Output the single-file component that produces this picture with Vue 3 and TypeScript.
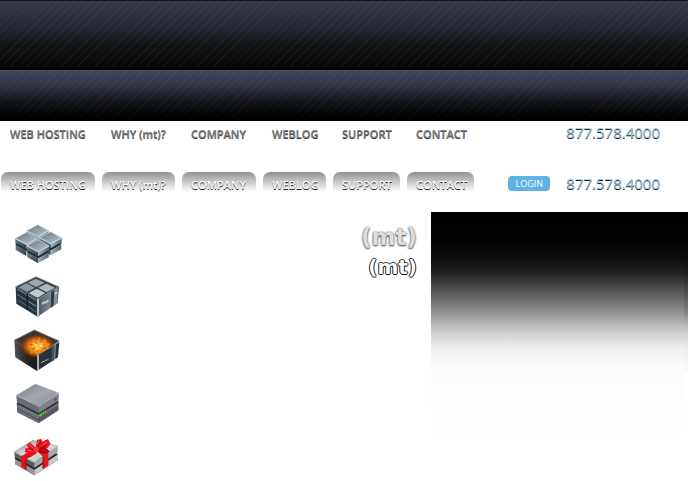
<script setup lang="ts">
interface Slab { x: number; y: number }

const links: string[] = ['WEB HOSTING', 'WHY (mt)?', 'COMPANY', 'WEBLOG', 'SUPPORT', 'CONTACT']
const phone = '877.578.4000'

// Back-to-front order so nearer cubes overlap the ones behind.
const cubes: Slab[] = [
  { x: 98, y: 47 },
  { x: 64, y: 70 },
  { x: 137, y: 68 },
  { x: 99, y: 92 },
]

const top = (x: number, y: number, w: number, h: number) =>
  `${x - w},${y} ${x},${y - h} ${x + w},${y} ${x},${y + h}`
const left = (x: number, y: number, w: number, h: number, t: number) =>
  `${x - w},${y} ${x},${y + h} ${x},${y + h + t} ${x - w},${y + t}`
const right = (x: number, y: number, w: number, h: number, t: number) =>
  `${x + w},${y} ${x},${y + h} ${x},${y + h + t} ${x + w},${y + t}`
</script>

<template>
  <div class="page">
    <header>
      <div class="band band-tall"></div>
      <div class="band band-short"></div>
    </header>

    <div class="row row-plain">
      <nav aria-label="Main">
        <ul class="tabs">
          <li v-for="l in links" :key="l"><a href="#">{{ l }}</a></li>
        </ul>
      </nav>
      <a class="phone" href="tel:8775784000">{{ phone }}</a>
    </div>

    <div class="row row-hover">
      <nav aria-label="Highlighted">
        <ul class="tabs">
          <li v-for="l in links" :key="l"><a href="#">{{ l }}</a></li>
        </ul>
      </nav>
      <div class="account">
        <button type="button" class="login">LOGIN</button>
        <a class="phone" href="tel:8775784000">{{ phone }}</a>
      </div>
    </div>

    <main class="content">
      <div class="icons">
        <svg viewBox="24 9 150 150" aria-hidden="true">
          <defs>
            <linearGradient id="cubeTop" x1="0" y1="0" x2="1" y2="1">
              <stop offset="0" stop-color="#66747f" /><stop offset=".5" stop-color="#929fa9" /><stop offset="1" stop-color="#bdc7ce" />
            </linearGradient>
            <linearGradient id="cubeLeft" x1="0" y1="0" x2="1" y2="0">
              <stop offset="0" stop-color="#66737d" /><stop offset="1" stop-color="#2d4656" />
            </linearGradient>
            <linearGradient id="cubeRight" x1="0" y1="0" x2="1" y2="0">
              <stop offset="0" stop-color="#9fb4c1" /><stop offset="1" stop-color="#59656e" />
            </linearGradient>
          </defs>
          <g v-for="c in cubes" :key="c.x">
            <polygon :points="top(c.x, c.y + 21, 32, 18)" fill="#26343f" />
            <polygon :points="left(c.x, c.y + 21, 32, 18, 14)" fill="url(#cubeLeft)" />
            <polygon :points="right(c.x, c.y + 21, 32, 18, 14)" fill="url(#cubeRight)" />
            <polygon :points="left(c.x, c.y, 33, 18, 14)" fill="url(#cubeLeft)" />
            <polygon :points="right(c.x, c.y, 33, 18, 14)" fill="url(#cubeRight)" />
            <path :d="`M${c.x - 32} ${c.y + 16}l32 18l32-18`" fill="none" stroke="#1f303b" stroke-width="4" />
            <polygon :points="top(c.x, c.y, 33, 18)" fill="url(#cubeTop)" stroke="#dce4e8" stroke-width="2" />
            <polyline :points="`${c.x - 33},${c.y + 1} ${c.x},${c.y + 19} ${c.x + 33},${c.y + 1}`" fill="none" stroke="#c4d8e3" stroke-width="3" />
          </g>
        </svg>

        <svg viewBox="24 3 150 150" aria-hidden="true">
          <defs>
            <linearGradient id="boxFront" x1="0" y1="0" x2="1" y2="0">
              <stop offset="0" stop-color="#4a5963" /><stop offset=".6" stop-color="#7b8790" /><stop offset="1" stop-color="#39454d" />
            </linearGradient>
          </defs>
          <polygon points="32,50 93,20 161,50 98,87" fill="#34414a" stroke="#89959d" stroke-width="2" />
          <polygon points="32,50 98,87 98,140 34,101" fill="#26343e" />
          <polygon points="98,87 162,50 158,99 98,140" fill="url(#boxFront)" />
          <polygon points="68,38 92,26 119,38 94,51" fill="#9da7ac" />
          <polygon points="41,52 64,40 90,53 66,66" fill="#8d999f" />
          <polygon points="99,53 124,41 150,53 125,67" fill="#aeb6b9" />
          <polygon points="71,69 95,56 121,69 98,83" fill="#c1c9cb" />
          <g fill="none" stroke-width="3">
            <polyline points="36,57 64,73 64,77" stroke="#7596a7" />
            <polyline points="69,76 94,91" stroke="#8fa6b3" />
            <polyline points="37,74 65,91" stroke="#638799" />
            <polyline points="70,94 94,109" stroke="#77a2b8" />
            <polyline points="38,90 64,106 94,126" stroke="#4e7183" />
            <polyline points="67,72 67,117" stroke="#0d161d" />
          </g>
          <polygon points="96,88 102,85 102,136 96,140" fill="#b9c4ca" />
          <polygon points="139,65 148,60 146,107 137,113" fill="#303b43" />
          <polygon points="148,60 159,53 156,101 146,107" fill="#87919a" />
          <path d="M110 99l8-7 3 4 6-7 5 1-2 6-9 5-3-1-7 5z" fill="#c3cbd0" />
          <path d="M149 72l7-5" stroke="#d5dde1" stroke-width="4" />
        </svg>

        <svg viewBox="24 3 150 150" aria-hidden="true">
          <defs>
            <linearGradient id="fireSide" x1="0" y1="0" x2="1" y2="0">
              <stop offset="0" stop-color="#54504f" /><stop offset=".6" stop-color="#28201d" /><stop offset="1" stop-color="#14191d" />
            </linearGradient>
            <radialGradient id="fireGlow">
              <stop offset="0" stop-color="#ffd65a" /><stop offset=".35" stop-color="#f99a20" /><stop offset=".7" stop-color="#c9530b" stop-opacity=".8" /><stop offset="1" stop-color="#672407" stop-opacity="0" />
            </radialGradient>
          </defs>
          <polygon points="28,52 88,21 162,54 97,98" fill="#3b3432" stroke="#716c69" stroke-width="2" />
          <polygon points="28,52 97,98 96,144 31,103" fill="url(#fireSide)" />
          <ellipse cx="98" cy="70" rx="54" ry="38" fill="url(#fireGlow)" />
          <path d="M66 73l8-6-6-9 13 2 2-12 11 7 9-11 6 10 14-5 1 10 14 3-9 8 5 10-14 1-3 10-12-5-9 11-7-10-13 5 1-11z" fill="#f08a1a" />
          <path d="M77 70l8-3-4-8 11 2 5-8 7 8 11-2-4 8 9 5-12 3-1 8-9-5-8 7-2-9z" fill="#ffbd3a" />
          <path d="M89 66l6-3 4 3-5 4zm15 1l6-2 2 4-6 2zm-11 9l6-3 3 4-6 3z" fill="#ffe98c" />
          <path d="M75 62l7 5m1 12l7-5m17-19l4-5m4 24l8 3m-30-18l5 4" stroke="#a8430a" stroke-width="3" />
          <polygon points="96,98 163,57 159,103 96,144" fill="#2b333a" />
          <polygon points="96,98 102,94 102,140 96,144" fill="#a9b0b5" />
          <path d="M102 94L162 57" stroke="#808a91" stroke-width="2" />
          <polygon points="141,71 150,65 148,111 139,116" fill="#4a535b" />
          <path d="M151 66l-2 44" stroke="#c4cbd0" stroke-width="2" />
          <path d="M108 120l6-5 3 1 5-5 4 1 5-5" fill="none" stroke="#b8bec2" stroke-width="3" />
        </svg>

        <svg viewBox="24 3 150 150" aria-hidden="true">
          <defs>
            <linearGradient id="serverTop" x1="0" y1="0" x2="1" y2="1">
              <stop offset="0" stop-color="#777b84" /><stop offset=".5" stop-color="#a5a7af" /><stop offset="1" stop-color="#858992" />
            </linearGradient>
          </defs>
          <polygon points="35,82 160,74 160,103 101,141 37,109" fill="#444851" />
          <polygon points="36,87 101,119 101,141 37,109" fill="#686d77" />
          <polygon points="101,119 160,82 160,103 101,141" fill="#565b64" />
          <polygon points="34,58 101,91 101,111 36,79" fill="#686c76" />
          <polygon points="101,91 162,52 160,75 101,111" fill="#7b808a" />
          <polygon points="34,58 91,24 162,51 101,91" fill="url(#serverTop)" stroke="#b9bcc3" stroke-width="2" />
          <path d="M36 81l65 33 59-37" fill="none" stroke="#30343b" stroke-width="4" />
          <path d="M37 87l64 33 59-37" fill="none" stroke="#a3a8b0" stroke-width="2" />
          <path d="M38 99l63 33 58-37" fill="none" stroke="#4b5058" stroke-width="3" />
          <path d="M103 119l21-13" stroke="#45d83c" stroke-width="7" />
          <path d="M112 110v8m7-12v8" stroke="#22452a" stroke-width="2" />
          <path d="M125 107l6-4" stroke="#d73a33" stroke-width="7" />
          <path d="M149 69l6-4v6l-6 4z" fill="#50545d" />
        </svg>

        <svg viewBox="24 162 150 150" aria-hidden="true">
          <defs>
            <linearGradient id="giftTop" x1="0" y1="0" x2="1" y2="1">
              <stop offset="0" stop-color="#777" /><stop offset=".45" stop-color="#e5e5e5" /><stop offset="1" stop-color="#aaa" />
            </linearGradient>
          </defs>
          <polygon points="30,244 155,232 158,253 88,298 31,265" fill="#383838" />
          <polygon points="30,248 88,280 88,298 31,265" fill="#969696" />
          <polygon points="88,280 158,235 157,254 88,298" fill="#c7c7c7" />
          <polygon points="28,228 88,260 88,276 29,243" fill="#5d5d5d" />
          <polygon points="88,260 158,211 158,229 88,276" fill="#a7a7a7" />
          <polygon points="28,228 83,193 158,210 88,260" fill="url(#giftTop)" stroke="#9e9e9e" stroke-width="2" />
          <path d="M30 246l58 33 69-45" fill="none" stroke="#222" stroke-width="4" />
          <path d="M82 222L48 241v32l15 8v-31l34-20z" fill="#e4101b" />
          <path d="M92 221l22 21v37l16-10v-38l-27-16z" fill="#e11722" />
          <path d="M63 251v30M114 244v34" stroke="#8e0810" stroke-width="3" />
          <path d="M88 222l-26-7-3 14 22 3-9 13 22-12zM94 216l-20-17-9 9 7 10 20 5zM92 217l4-26 13-2 5 11-13 20zM99 219l13-22 17-8 8 15-10 12-23 8z" fill="#e91420" />
          <path d="M95 218l26-2 12 11-13 4-22-5zM87 222l-16-4M98 214l9-17m-4 24l24-16" fill="#ce0715" stroke="#8f0711" stroke-width="3" />
          <path d="M72 206l13 10m13-12l2-8m13 12l12-9m-57 24l14 1" stroke="#ff6468" stroke-width="3" />
          <circle cx="94" cy="220" r="8" fill="#ff303a" />
        </svg>
      </div>

      <div class="logos">
        <span class="logo logo-large">(mt)</span>
        <span class="logo logo-small">(mt)</span>
      </div>

      <div class="fade"></div>
    </main>
  </div>
</template>

<style>
body {
  margin: 0;
  background: #fff;
}
</style>

<style scoped>
.page {
  font-family: "Open Sans", "Noto Sans", sans-serif;
  overflow: hidden;
}
.band {
  box-sizing: border-box;
}
.band-tall {
  height: 70px;
  border-top: 1px solid #15161b;
  border-bottom: 3px solid #000;
  background:
    repeating-linear-gradient(135deg, transparent 0 5px, rgba(150, 150, 150, 0.09) 5px 6px),
    linear-gradient(#353846, #242733 40%, #111315 68%, #050507);
}
.band-short {
  height: 51px;
  border-top: 1px solid #4c4b5e;
  border-bottom: 3px solid #000;
  background:
    linear-gradient(transparent 30%, rgba(0, 0, 0, 0.4)),
    repeating-linear-gradient(135deg, transparent 0 5px, rgba(150, 150, 150, 0.08) 5px 6px),
    linear-gradient(#43475b, #242734 50%, #060608 90%, #000);
}
.row {
  display: flex;
  justify-content: space-between;
  align-items: flex-start;
  box-sizing: border-box;
  padding: 0 28px 0 1px;
}
.row-plain {
  height: 51px;
}
.row-hover {
  height: 40px;
}
.tabs {
  display: grid;
  grid-template-columns: 94px 73px 74px 63px 67px 67px;
  gap: 7px;
  margin: 0;
  padding: 0;
  list-style: none;
}
.tabs a {
  display: block;
  padding-left: 9px;
  font-size: 11px;
  font-weight: 600;
  line-height: 25px;
  white-space: nowrap;
  text-decoration: none;
  color: #808080;
  text-shadow: 0 1px 0 #444;
}
.row-hover .tabs a {
  border-radius: 7px 7px 0 0;
  background: linear-gradient(#909090, #d0d0d0 45%, #fff 80%);
  color: #fff;
  text-shadow: 0 1px 0 #222;
}
.account {
  display: flex;
  align-items: center;
  gap: 16px;
}
.login {
  width: 42px;
  height: 15px;
  padding: 0;
  border: 0;
  border-radius: 4px;
  background: #5fb3e4;
  color: #fff;
  font-family: inherit;
  font-size: 9px;
  font-weight: 500;
  line-height: 15px;
}
.phone {
  font-size: 15px;
  font-weight: 400;
  line-height: 22px;
  text-decoration: none;
  color: #a9cbdc;
  text-shadow: 0 1px 0 #14222c;
}
.content {
  display: grid;
  grid-template-columns: 50px minmax(0, 1fr) 257px;
  gap: 14px;
  padding-left: 13px;
}
.icons {
  display: grid;
  gap: 3px;
  padding-top: 6px;
}
.icons svg {
  display: block;
  width: 50px;
  height: 50px;
}
.logos {
  display: flex;
  flex-direction: column;
  align-items: flex-end;
  padding-top: 10px;
}
.logo {
  font-family: "DejaVu Sans", sans-serif;
  font-weight: 700;
  line-height: 30px;
  color: #fff;
}
.logo-large {
  font-size: 23px;
  color: #ddd;
  text-shadow: 0 1px 2px #444, 0 0 2px #777;
}
.logo-small {
  font-size: 20px;
  text-shadow: 0 1px 0 #000, 1px 0 0 #222, -1px 0 0 #222, 0 -1px 0 #444;
}
.fade {
  height: 228px;
  background:
    linear-gradient(rgba(255, 255, 255, 0) 100px, #fff 170px) right / 4px 100% no-repeat,
    linear-gradient(90deg, transparent 253px, rgba(0, 0, 0, 0.1) 253px) 0 0 / 100% 160px no-repeat,
    linear-gradient(
      #000 0,
      #030303 32px,
      #0e0e0e 48px,
      #252525 62px,
      #484848 74px,
      #6c6c6c 88px,
      #a0a0a0 105px,
      #d0d0d0 121px,
      #f0f0f0 138px,
      #fcfcfc 156px,
      #fff 100%
    );
}
</style>
